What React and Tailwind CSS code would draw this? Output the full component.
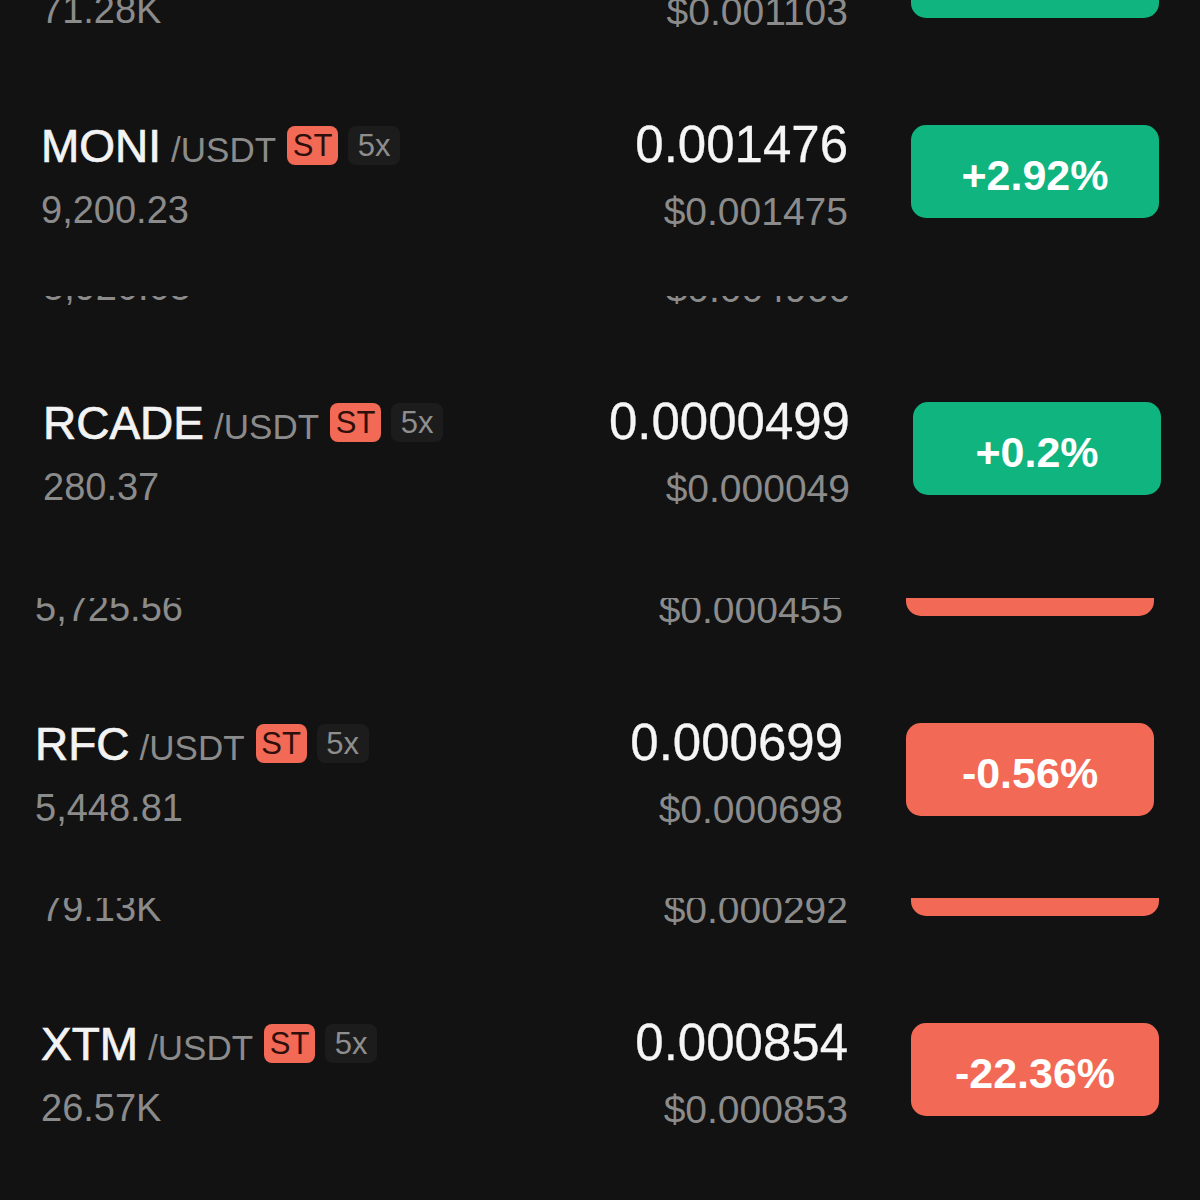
import React from "react";

function Row({ name, vol, price, usd, change, up }) {
  return (
    <div className="flex h-[200px] items-start">
      <div className="flex flex-1 flex-col">
        <div className="flex h-[40px] items-center">
          <div className="flex items-baseline mt-[1px]">
            <span className="text-[length:46px] leading-[46px] text-[color:#f3f3f3] [-webkit-text-stroke:0.7px_#f3f3f3]">{name}</span>
            <span className="ml-[10px] text-[length:35px] leading-[35px] text-[color:#8b8b8b]">/USDT</span>
          </div>
          <span className="ml-[11px] flex h-[39px] w-[51px] items-center justify-center rounded-[8px] bg-[#f26a55]">
            <span className="text-[31px] leading-none text-[#2e0f0b]">ST</span>
          </span>
          <span className="ml-[10px] flex h-[39px] w-[52px] items-center justify-center rounded-[8px] bg-[#1c1c1c]">
            <span className="text-[31px] leading-none text-[#8e8e8e]">5x</span>
          </span>
        </div>
        <div className="mt-[23px] h-[44px] text-[length:38px] leading-[44px] text-[color:#8b8b8b]">{vol}</div>
      </div>
      <div className="flex flex-col items-end">
        <div className="h-[40px] text-[length:51px] leading-[40px] text-[color:#f5f5f5] [-webkit-text-stroke:0.3px_#f5f5f5]">{price}</div>
        <div className="mt-[25px] h-[44px] text-[length:39px] leading-[44px] text-[color:#8b8b8b]">{usd}</div>
      </div>
      <div
        className={
          "ml-[63px] flex h-[93px] w-[248px] items-center justify-center rounded-[15px] pt-[8px] text-[length:43px] font-bold leading-none text-white " +
          (up ? "bg-[#10b47f]" : "bg-[#f26a55]")
        }
      >
        {change}
      </div>
    </div>
  );
}

export default function App() {
  return (
    <div className="flex h-[1200px] w-[1200px] flex-col overflow-hidden bg-[#121212] font-['Liberation_Sans',Arial,sans-serif]">
      <div className="h-[296px] overflow-hidden pl-[41px] pr-[41px]">
        <div className="mt-[-75px]">
          <Row name="BOOM" vol="71.28K" price="0.001104" usd="$0.001103" change="+1.20%" up />
          <Row name="MONI" vol="9,200.23" price="0.001476" usd="$0.001475" change="+2.92%" up />
        </div>
      </div>
      <div className="h-[302px] overflow-hidden pl-[43px] pr-[39px]">
        <div className="mt-[-94px]">
          <Row name="RAIN" vol="5,920.05" price="0.004966" usd="$0.004966" change="+0.5%" up />
          <Row name="RCADE" vol="280.37" price="0.0000499" usd="$0.000049" change="+0.2%" up />
        </div>
      </div>
      <div className="h-[300px] overflow-hidden pl-[35px] pr-[46px]">
        <div className="mt-[-75px]">
          <Row name="REKT" vol="5,725.56" price="0.000455" usd="$0.000455" change="-1.10%" />
          <Row name="RFC" vol="5,448.81" price="0.000699" usd="$0.000698" change="-0.56%" />
        </div>
      </div>
      <div className="h-[302px] overflow-hidden pl-[41px] pr-[41px]">
        <div className="mt-[-75px]">
          <Row name="WOLF" vol="79.13K" price="0.000292" usd="$0.000292" change="-3.40%" />
          <Row name="XTM" vol="26.57K" price="0.000854" usd="$0.000853" change="-22.36%" />
        </div>
      </div>
    </div>
  );
}
